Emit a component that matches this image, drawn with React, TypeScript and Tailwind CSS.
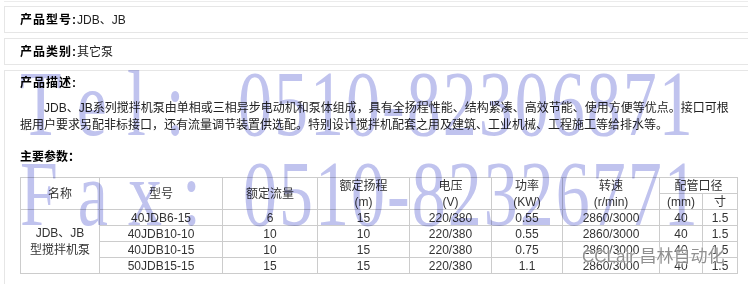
import React from "react";

const rows = [
  ["40JDB6-15", "6", "15", "220/380", "0.55", "2860/3000", "40", "1.5"],
  ["40JDB10-10", "10", "10", "220/380", "0.55", "2860/3000", "40", "1.5"],
  ["40JDB10-15", "10", "15", "220/380", "0.75", "2860/3000", "40", "1.5"],
  ["50JDB15-15", "15", "15", "220/380", "1.1", "2860/3000", "40", "1.5"],
];

const font = "font-['Liberation_Sans','Noto_Sans_CJK_SC',sans-serif]";

function Cell({ children, className = "" }: { children: React.ReactNode; className?: string }) {
  return (
    <div className={`bg-white flex flex-col items-center justify-center text-center leading-[16px] ${className}`}>
      {children}
    </div>
  );
}

export default function App() {
  return (
    <div className={`relative w-[748px] h-[284px] overflow-hidden bg-white text-[12px] text-[#222] ${font}`}>
      <div className="h-[2px] w-[800px] ml-[4px] border-b border-[#ececec]" />
      <div className="mt-[4px] ml-[4px] w-[800px] h-[27px] border border-[#e6e6e6] flex items-center pl-[15px]">
        <span className="font-bold text-black tracking-[1px]">产品型号:</span>
        <span>JDB、JB</span>
      </div>
      <div className="mt-[5px] ml-[4px] w-[800px] h-[27px] border border-[#e6e6e6] flex items-center pl-[15px]">
        <span className="font-bold text-black tracking-[1px]">产品类别:</span>
        <span>其它泵</span>
      </div>
      <div className="mt-[5px] ml-[4px] w-[800px] h-[300px] border border-[#e6e6e6] pl-[15px] pt-[3px]">
        <div className="font-bold text-black tracking-[1px] leading-[18px]">产品描述:</div>
        <div className="mt-[8px] leading-[17px] whitespace-nowrap">
          <div className="pl-[24px]">
            JDB、JB系列搅拌机泵由单相或三相异步电动机和泵体组成，具有全扬程性能、结构紧凑、高效节能、使用方便等优点。接口可根
          </div>
          <div>据用户要求另配非标接口，还有流量调节装置供选配。特别设计搅拌机配套之用及建筑、工业机械、工程施工等给排水等。</div>
        </div>
        <div className="mt-[14px] font-bold text-black leading-[18px]">主要参数：</div>
        <div className="mt-[11px] w-[718px] grid grid-cols-[78px_122px_94px_91px_81px_70px_96px_42px_34px] grid-rows-[15px_15px_15px_15px_15px_15px] gap-px p-px bg-[#cccccc] text-[#333]">
          <Cell className="row-span-2">名称</Cell>
          <Cell className="row-span-2">型号</Cell>
          <Cell className="row-span-2">额定流量</Cell>
          <Cell className="row-span-2">
            <span>额定扬程</span>
            <span>(m)</span>
          </Cell>
          <Cell className="row-span-2">
            <span>电压</span>
            <span>(V)</span>
          </Cell>
          <Cell className="row-span-2">
            <span>功率</span>
            <span>(KW)</span>
          </Cell>
          <Cell className="row-span-2">
            <span>转速</span>
            <span>(r/min)</span>
          </Cell>
          <Cell className="col-span-2">配管口径</Cell>
          <Cell>(mm)</Cell>
          <Cell>寸</Cell>
          <Cell className="row-span-4 col-start-1 row-start-3 leading-[17px]">
            <span>JDB、JB</span>
            <span>型搅拌机泵</span>
          </Cell>
          {rows.map((r, i) =>
            r.map((v, j) => (
              <Cell key={`${i}-${j}`}>{v}</Cell>
            ))
          )}
        </div>
      </div>

      {/* watermark */}
      <div className="pointer-events-none absolute inset-0 mix-blend-multiply text-[#c0c3ee] font-['Liberation_Serif',serif] text-[68px] leading-[68px] whitespace-nowrap">
        <div className="absolute left-[20px] top-[78px] origin-[0_57px] scale-y-[1.38] tracking-[20px]">Tel:</div>
        <div className="absolute left-[238px] top-[78px] origin-[0_57px] scale-y-[1.38] tracking-[2px]">0510-82306871</div>
        <div className="absolute left-[20px] top-[168px] origin-[0_57px] scale-y-[1.38] tracking-[20px]">Fax:</div>
        <div className="absolute left-[243px] top-[168px] origin-[0_57px] scale-y-[1.38] tracking-[2px]">0510-82326771</div>
      </div>
      <div className="pointer-events-none absolute left-[582px] top-[247px] text-[17px] leading-[20px] text-[#8f8f8f] whitespace-nowrap [text-shadow:0_0_2px_#fff,0_0_2px_#fff] font-['Liberation_Sans','Noto_Sans_CJK_SC',sans-serif]">
        CCLair 昌林自动化
      </div>
    </div>
  );
}
